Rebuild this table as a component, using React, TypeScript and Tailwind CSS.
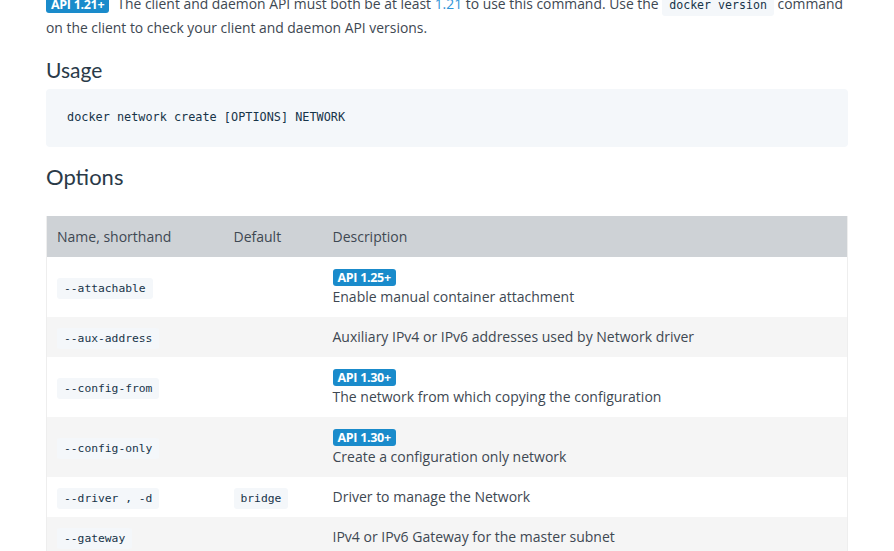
import React from 'react'

const mono = "font-['DejaVu_Sans_Mono',monospace]"

type Row = {
  name: string
  def?: string
  api?: string
  desc: string
}

const rows: Row[] = [
  { name: '--attachable', api: 'API 1.25+', desc: 'Enable manual container attachment' },
  { name: '--aux-address', desc: 'Auxiliary IPv4 or IPv6 addresses used by Network driver' },
  { name: '--config-from', api: 'API 1.30+', desc: 'The network from which copying the configuration' },
  { name: '--config-only', api: 'API 1.30+', desc: 'Create a configuration only network' },
  { name: '--driver , -d', def: 'bridge', desc: 'Driver to manage the Network' },
  { name: '--gateway', desc: 'IPv4 or IPv6 Gateway for the master subnet' },
]

function Badge({ children }: { children: React.ReactNode }) {
  return (
    <span className="inline-block rounded-[3px] bg-[#1a8bcb] px-[5px] text-[12.5px] font-bold leading-[17px] tracking-[-0.3px] text-white">
      {children}
    </span>
  )
}

function Code({ children, size = 'text-[11.3px]' }: { children: React.ReactNode; size?: string }) {
  return (
    <code className={`${mono} ${size} inline-block rounded-[3px] bg-[#f4f7fa] px-[7px] leading-[21px] text-[#173449]`}>
      {children}
    </code>
  )
}

export default function App() {
  return (
    <div className="min-h-screen overflow-hidden bg-white font-['Open_Sans',sans-serif] text-[#3e4852]">
      <div className="ml-[46px] w-[802px]">
        {/* intro */}
        <p className="-mt-[8px] text-[13.9px] leading-[24px]">
          <span className="mr-[8px]">
            <Badge>API 1.21+</Badge>
          </span>
          The client and daemon API must both be at least{' '}
          <a className="text-[#2f95d8]">1.21</a> to use this command. Use the{' '}
          <Code size="text-[11.6px]">docker version</Code> command on the client to check your client and daemon API
          versions.
        </p>

        {/* Usage */}
        <h2 className="mt-[17px] font-['Lato',sans-serif] text-[21px] leading-[26px] text-[#2a3a48]">
          Usage
        </h2>
        <pre className={`${mono} mt-[6px] flex h-[58px] items-center rounded-[4px] bg-[#f4f7fa] px-[21px] text-[11.85px] text-[#173449]`}>
          docker network create [OPTIONS] NETWORK
        </pre>

        {/* Options */}
        <h2 className="mt-[17px] font-['Lato',sans-serif] text-[22px] leading-[26px] text-[#2a3a48]">
          Options
        </h2>

        <table className="mt-[26px] w-full border-collapse border-x border-[#eeeeee] text-[14px]">
          <thead>
            <tr className="h-[41px] bg-[#ced2d6] text-left">
              <th className="w-[177px] px-[10px] font-normal">Name, shorthand</th>
              <th className="w-[99px] px-[10px] font-normal">Default</th>
              <th className="px-[10px] font-normal">Description</th>
            </tr>
          </thead>
          <tbody>
            {rows.map((r, i) => (
              <tr key={r.name} className={i % 2 === 1 ? 'bg-[#f5f5f5]' : 'bg-white'}>
                <td className="px-[10px] align-middle">
                  <Code>{r.name}</Code>
                </td>
                <td className="px-[10px] align-middle">{r.def && <Code>{r.def}</Code>}</td>
                <td className="px-[10px] py-[10px] leading-[20px]">
                  {r.api && (
                    <div className="mb-[1px] mt-[2px] flex">
                      <Badge>{r.api}</Badge>
                    </div>
                  )}
                  <div>{r.desc}</div>
                </td>
              </tr>
            ))}
          </tbody>
        </table>
      </div>
    </div>
  )
}
